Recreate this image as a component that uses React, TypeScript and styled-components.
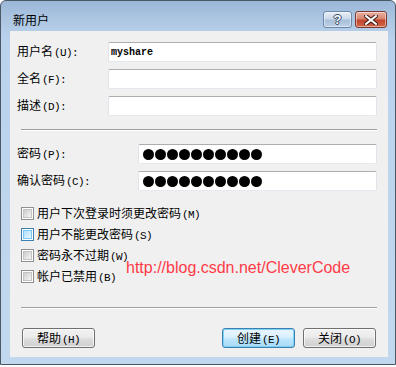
import React from 'react'
import styled, { createGlobalStyle, css } from 'styled-components'

const GlobalStyle = createGlobalStyle`
  html, body { margin: 0; padding: 0; background: #ffffff; }
  body { font-family: "Noto Sans CJK SC", "DejaVu Sans", sans-serif; font-size: 12px; color: #000; }
`

const Window = styled.div`
  position: relative;
  box-sizing: border-box;
  width: 396px;
  height: 365px;
  border: 1px solid #4b5866;
  border-radius: 6px 6px 0 0;
  background: linear-gradient(#9bb7d8 0px, #aec7e3 20px, #bad2ec 40px, #c2d8ef 100%);
  display: flex;
  flex-direction: column;
`

const TitleBar = styled.div`
  height: 30px;
  display: flex;
  align-items: flex-start;
  padding: 0 8px 0 12px;
`

const Title = styled.div`
  margin-top: 11px;
  font-size: 12px;
  line-height: 16px;
  color: #000;
  flex: 1;
`

const CaptionButtons = styled.div`
  display: flex;
  gap: 3px;
  margin-top: 10px;
`

const CaptionButton = styled.div<{ $close?: boolean }>`
  box-sizing: border-box;
  height: 17px;
  width: ${p => (p.$close ? 32 : 29)}px;
  border: 1px solid ${p => (p.$close ? '#7d3a30' : '#6d87a6')};
  border-radius: 3px;
  display: flex;
  align-items: center;
  justify-content: center;
  box-shadow: inset 0 0 0 1px rgba(255, 255, 255, 0.45);
  ${p =>
    p.$close
      ? css`background: linear-gradient(#eab3a5 0%, #d98470 45%, #c2452c 55%, #d0674a 100%);`
      : css`background: linear-gradient(#e7eef7 0%, #cbd9ea 45%, #a9c0da 55%, #bdd0e6 100%);`}
`

const QMark = styled.span`
  font-family: "Liberation Sans", sans-serif;
  font-weight: bold;
  font-size: 13px;
  line-height: 13px;
  color: #fff;
  text-shadow: 1px 0 0 #34475e, -1px 0 0 #34475e, 0 1px 0 #34475e, 0 -1px 0 #34475e;
`

const Client = styled.div`
  margin: 0 7px 0 9px;
  height: 326px;
  box-sizing: border-box;
  background: #f0f0f0;
  padding: 11px 11px 9px 7px;
  display: flex;
  flex-direction: column;
  position: relative;
`

const FieldGrid = styled.div<{ $labelWidth: number; $top?: number }>`
  display: grid;
  grid-template-columns: ${p => p.$labelWidth}px 1fr;
  grid-auto-rows: 20px;
  row-gap: 7px;
  align-items: center;
  margin-top: ${p => p.$top ?? 0}px;
`

const Label = styled.label`
  font-size: 12px;
  line-height: 14px;
  white-space: nowrap;
  display: flex;
  align-items: baseline;
`

const Hotkey = styled.span`
  font-family: "Liberation Mono", "DejaVu Sans Mono", monospace;
  font-size: 11px;
  letter-spacing: -0.6px;
  margin-left: 1px;
`

const TextBox = styled.div`
  box-sizing: border-box;
  height: 20px;
  background: #fff;
  border: 1px solid #e2e3ea;
  border-top-color: #abadb3;
  border-bottom-color: #e3e9ef;
  border-radius: 2px;
  display: flex;
  align-items: center;
  padding-left: 2px;
  font-family: "Liberation Mono", monospace;
  font-size: 10px;
  font-weight: bold;
`

const Dots = styled.div`
  display: flex;
  gap: 1px;
  padding-left: 2px;
`

const Dot = styled.span`
  width: 11px;
  height: 11px;
  border-radius: 50%;
  background: #000;
`

const Separator = styled.div<{ $top: number }>`
  margin: ${p => p.$top}px 0 0 4px;
  height: 1px;
  border-top: 1px solid #a0a0a0;
  background: #fff;
`

const CheckList = styled.div`
  margin: 12px 0 0 4px;
  display: flex;
  flex-direction: column;
`

const CheckRow = styled.div`
  height: 21px;
  display: flex;
  align-items: center;
  gap: 3px;
`

const Box = styled.span<{ $hover?: boolean }>`
  box-sizing: border-box;
  width: 13px;
  height: 13px;
  border: 1px solid ${p => (p.$hover ? '#3c7fb1' : '#8e8f8f')};
  background: #fff;
  padding: 1px;
  display: flex;
  &::after {
    content: '';
    flex: 1;
    border: 1px solid ${p => (p.$hover ? '#79c6f9' : '#c4c4c4')};
    background: ${p =>
      p.$hover
        ? 'linear-gradient(135deg, #b1dffd, #e9f7fe)'
        : 'linear-gradient(135deg, #cbcbcb, #f6f6f6)'};
  }
`

const Watermark = styled.div`
  position: absolute;
  left: 116px;
  top: 228px;
  font-family: "Liberation Sans", Arial, sans-serif;
  font-size: 16px;
  color: #ff3b47;
  white-space: nowrap;
`

const ButtonRow = styled.div`
  margin: 19px 1px 0 5px;
  display: flex;
  justify-content: space-between;
`

const ButtonGroup = styled.div`
  display: flex;
  gap: 8px;
`

const Button = styled.button<{ $default?: boolean }>`
  box-sizing: border-box;
  width: 73px;
  height: 20px;
  padding: 0;
  display: flex;
  align-items: baseline;
  justify-content: center;
  padding-top: 2px;
  font-family: "Noto Sans CJK SC", sans-serif;
  font-size: 12px;
  line-height: 14px;
  color: #000;
  border: 1px solid ${p => (p.$default ? '#3c7fb1' : '#707070')};
  border-radius: 3px;
  background: ${p =>
    p.$default
      ? 'linear-gradient(#eaf6fd 0%, #d9f0fc 45%, #bee6fd 55%, #a7d9f5 100%)'
      : 'linear-gradient(#f2f2f2 0%, #ebebeb 45%, #dddddd 55%, #cfcfcf 100%)'};
  box-shadow: inset 0 0 0 1px ${p => (p.$default ? '#7ed0f5' : 'rgba(255,255,255,0.7)')};
`

// splits "密码(P):" into the Chinese text and its access-key part
function Caption({ text }: { text: string }) {
  const m = text.match(/^(.*?)(\(.\):?)$/)
  if (!m) return <>{text}</>
  return (
    <>
      <span>{m[1]}</span>
      <Hotkey>{m[2]}</Hotkey>
    </>
  )
}

const checks = [
  { text: '用户下次登录时须更改密码(M)' },
  { text: '用户不能更改密码(S)', hover: true },
  { text: '密码永不过期(W)' },
  { text: '帐户已禁用(B)' },
]

export default function App() {
  return (
    <>
      <GlobalStyle />
      <Window>
        <TitleBar>
          <Title>新用户</Title>
          <CaptionButtons>
            <CaptionButton>
              <QMark>?</QMark>
            </CaptionButton>
            <CaptionButton $close>
              <svg width="14" height="10" viewBox="0 0 14 10">
                <path d="M2 1 L12 9 M12 1 L2 9" stroke="#3b1a14" strokeWidth="4" strokeLinecap="square" />
                <path d="M2 1 L12 9 M12 1 L2 9" stroke="#ffffff" strokeWidth="2" strokeLinecap="square" />
              </svg>
            </CaptionButton>
          </CaptionButtons>
        </TitleBar>
        <Client>
          <FieldGrid $labelWidth={91}>
            <Label><Caption text="用户名(U):" /></Label>
            <TextBox>myshare</TextBox>
            <Label><Caption text="全名(F):" /></Label>
            <TextBox />
            <Label><Caption text="描述(D):" /></Label>
            <TextBox />
          </FieldGrid>
          <Separator $top={13} />
          <FieldGrid $labelWidth={121} $top={13}>
            <Label><Caption text="密码(P):" /></Label>
            <TextBox>
              <Dots>{Array.from({ length: 10 }, (_, i) => <Dot key={i} />)}</Dots>
            </TextBox>
            <Label><Caption text="确认密码(C):" /></Label>
            <TextBox>
              <Dots>{Array.from({ length: 10 }, (_, i) => <Dot key={i} />)}</Dots>
            </TextBox>
          </FieldGrid>
          <CheckList>
            {checks.map(c => (
              <CheckRow key={c.text}>
                <Box $hover={c.hover} />
                <Label><Caption text={c.text} /></Label>
              </CheckRow>
            ))}
          </CheckList>
          <Separator $top={20} />
          <ButtonRow>
            <Button><Caption text="帮助(H)" /></Button>
            <ButtonGroup>
              <Button $default><Caption text="创建(E)" /></Button>
              <Button><Caption text="关闭(O)" /></Button>
            </ButtonGroup>
          </ButtonRow>
          <Watermark>http://blog.csdn.net/CleverCode</Watermark>
        </Client>
      </Window>
    </>
  )
}
